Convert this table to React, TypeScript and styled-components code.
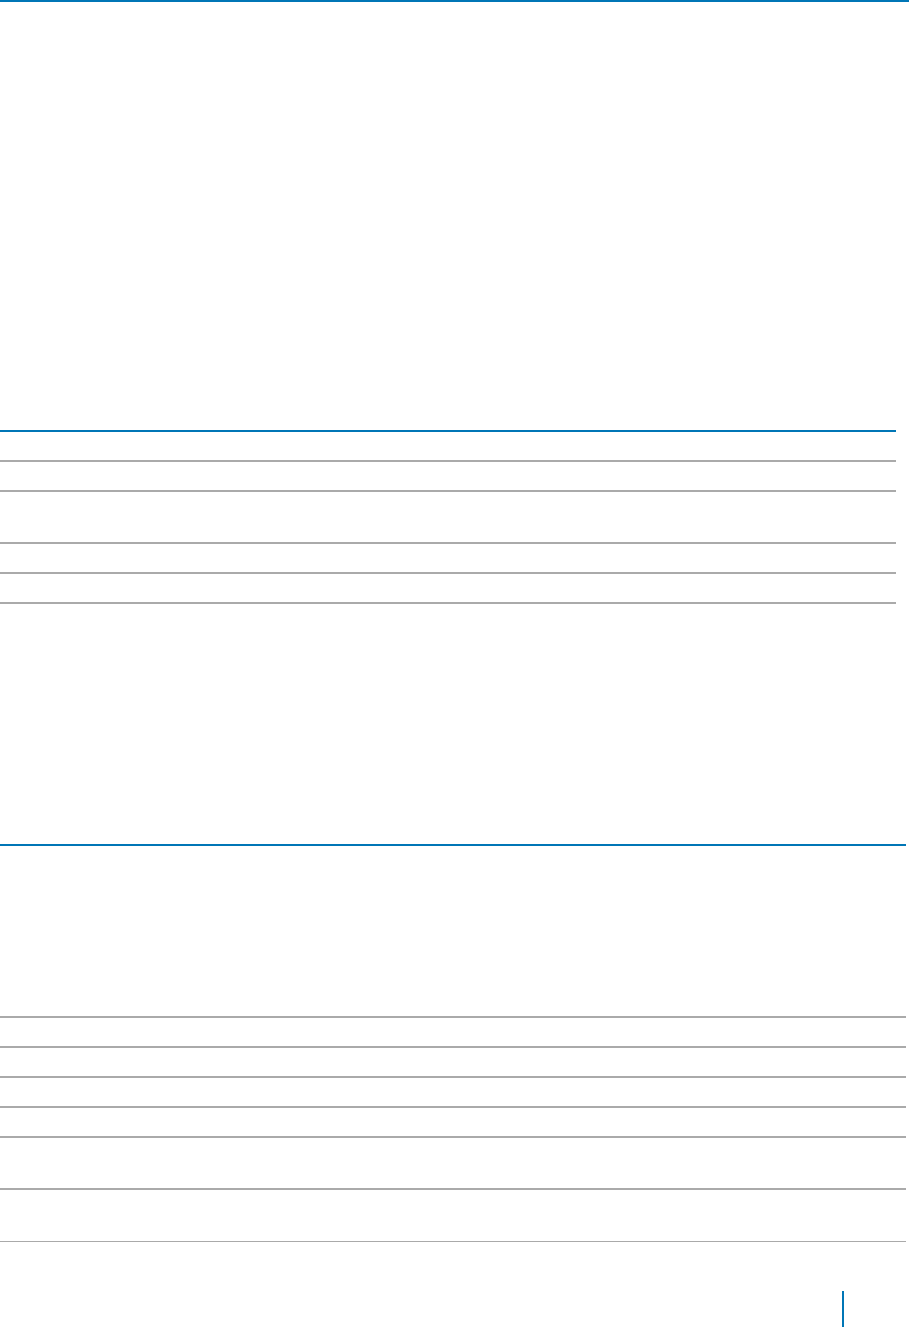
import styled, { createGlobalStyle } from "styled-components";

const BLUE = "#0076b6";
const GRAY = "#aaaaaa";

const GlobalStyle = createGlobalStyle`
  html, body {
    margin: 0;
    padding: 0;
    background: #ffffff;
    font-family: "Liberation Sans", Arial, sans-serif;
  }
`;

const Page = styled.div`
  width: 910px;
  height: 1327px;
  display: flex;
  flex-direction: column;
  overflow: hidden;
`;

const HeaderRule = styled.div`
  width: 909px;
  height: 2px;
  background: ${BLUE};
`;

const Spacer = styled.div<{ $h: number }>`
  height: ${(p) => p.$h}px;
  flex-shrink: 0;
`;

const Table = styled.div<{ $w: number }>`
  width: ${(p) => p.$w}px;
  border-top: 2px solid ${BLUE};
  display: flex;
  flex-direction: column;
`;

const Row = styled.div<{ $h: number; $thin?: boolean }>`
  height: ${(p) => p.$h}px;
  border-bottom: ${(p) => (p.$thin ? 1 : 2)}px solid ${GRAY};
  flex-shrink: 0;
`;

const Footer = styled.div`
  display: flex;
  padding-left: 842px;
`;

const FooterBar = styled.div`
  width: 2px;
  height: 36px;
  background: ${BLUE};
`;

const firstRows = [28, 28, 50, 28, 28];
const secondRows = [170, 28, 28, 28, 28, 50, 51];

const App: React.FC = () => {
  return (
    <>
      <GlobalStyle />
      <Page>
        <HeaderRule />
        <Spacer $h={428} />
        <Table $w={896}>
          {firstRows.map((h, i) => (
            <Row key={i} $h={h} />
          ))}
        </Table>
        <Spacer $h={240} />
        <Table $w={906}>
          {secondRows.map((h, i) => (
            <Row key={i} $h={h} $thin={i === secondRows.length - 1} />
          ))}
        </Table>
        <Spacer $h={49} />
        <Footer>
          <FooterBar />
        </Footer>
      </Page>
    </>
  );
};

export default App;
